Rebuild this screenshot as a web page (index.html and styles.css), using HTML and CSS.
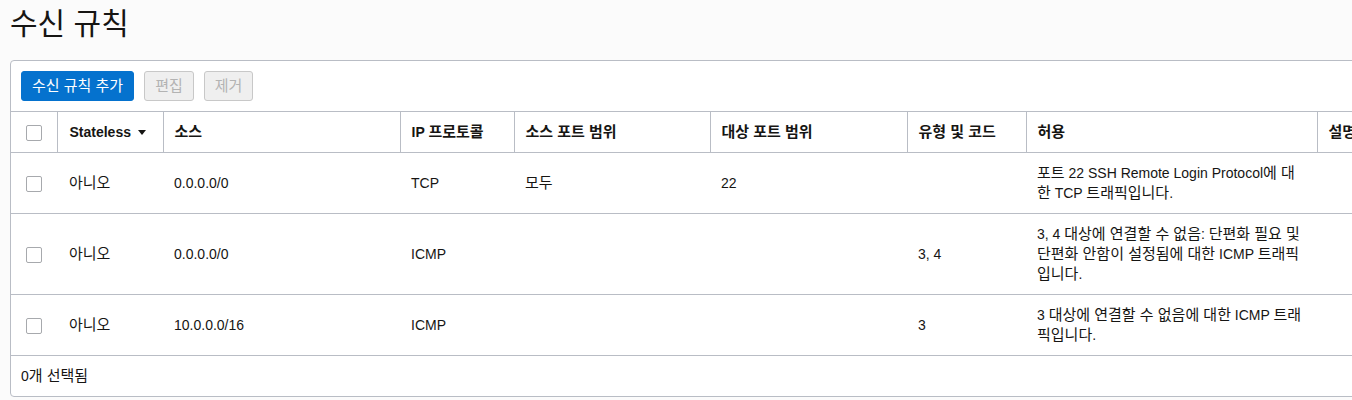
FILE: index.html
```html
<!DOCTYPE html>
<html lang="ko">
<head>
<meta charset="utf-8">
<title>수신 규칙</title>
<link rel="stylesheet" href="styles.css">
</head>
<body>
<h1 class="title">수신 규칙</h1>
<div class="panel">
  <div class="toolbar">
    <button class="btn btn-primary">수신 규칙 추가</button>
    <button class="btn btn-disabled">편집</button>
    <button class="btn btn-disabled">제거</button>
  </div>
  <table class="grid">
    <colgroup>
      <col class="c-check">
      <col class="c-state">
      <col class="c-src">
      <col class="c-proto">
      <col class="c-sport">
      <col class="c-dport">
      <col class="c-type">
      <col class="c-allow">
      <col class="c-desc">
    </colgroup>
    <thead>
      <tr>
        <th class="cb-cell"><span class="cb"></span></th>
        <th class="first">Stateless <span class="caret"></span></th>
        <th><span class="k">소스</span></th>
        <th>IP <span class="k">프로토콜</span></th>
        <th><span class="k">소스 포트 범위</span></th>
        <th><span class="k">대상 포트 범위</span></th>
        <th><span class="k">유형 및 코드</span></th>
        <th><span class="k">허용</span></th>
        <th><span class="k">설명</span></th>
      </tr>
    </thead>
    <tbody>
      <tr>
        <td class="cb-cell"><span class="cb"></span></td>
        <td class="first"><span class="k">아니오</span></td>
        <td>0.0.0.0/0</td>
        <td>TCP</td>
        <td><span class="k">모두</span></td>
        <td>22</td>
        <td></td>
        <td><span class="k">포트</span> 22 SSH Remote Login Protocol<span class="k">에 대</span><br><span class="k">한</span> TCP <span class="k">트래픽입니다</span>.</td>
        <td></td>
      </tr>
      <tr>
        <td class="cb-cell"><span class="cb"></span></td>
        <td class="first"><span class="k">아니오</span></td>
        <td>0.0.0.0/0</td>
        <td>ICMP</td>
        <td></td>
        <td></td>
        <td>3, 4</td>
        <td>3, 4 <span class="k">대상에 연결할 수 없음</span>: <span class="k">단편화 필요 및</span><br><span class="k">단편화 안함이 설정됨에 대한</span> ICMP <span class="k">트래픽</span><br><span class="k">입니다</span>.</td>
        <td></td>
      </tr>
      <tr>
        <td class="cb-cell"><span class="cb"></span></td>
        <td class="first"><span class="k">아니오</span></td>
        <td>10.0.0.0/16</td>
        <td>ICMP</td>
        <td></td>
        <td></td>
        <td>3</td>
        <td>3 <span class="k">대상에 연결할 수 없음에 대한</span> ICMP <span class="k">트래</span><br><span class="k">픽입니다</span>.</td>
        <td></td>
      </tr>
    </tbody>
  </table>
  <div class="footer">0<span class="k">개 선택됨</span></div>
</div>
</body>
</html>
```
FILE: styles.css
```css
html, body {
  margin: 0;
  padding: 0;
  overflow: hidden;
}
body {
  background: #fbfbfb;
  font-family: "Liberation Sans", Arial, "Noto Sans CJK KR", sans-serif;
  font-size: 14px;
  color: #161513;
  padding: 0 0 0 10px;
}
.k {
  font-size: 15px;
  line-height: 16px;
}
.title {
  margin: 0;
  padding-top: 6px;
  height: 54px;
  font-size: 30px;
  font-weight: 400;
  line-height: 36px;
  color: #161513;
}
.panel {
  width: 1420px;
  background: #fff;
  border: 1px solid #b9bdc5;
  border-radius: 4px;
}
.toolbar {
  display: flex;
  gap: 10px;
  padding: 10px 10px;
  border-bottom: 1px solid #b9bdc5;
}
.btn {
  font-family: inherit;
  font-size: 15px;
  height: 30px;
  padding: 0 10px;
  border-radius: 3px;
  line-height: 28px;
}
.btn-primary {
  background: #0572ce;
  border: 1px solid #0572ce;
  color: #fff;
}
.btn-disabled {
  background: #efefef;
  border: 1px solid #c8c8c8;
  color: #b3b3b3;
}
.grid {
  border-collapse: collapse;
  table-layout: fixed;
  width: 1420px;
}
.c-check { width: 46px; }
.c-state { width: 106px; }
.c-src { width: 237px; }
.c-proto { width: 114px; }
.c-sport { width: 196px; }
.c-dport { width: 197px; }
.c-type { width: 119px; }
.c-allow { width: 291px; }
.c-desc { width: 114px; }
.grid th, .grid td {
  padding: 10px 10px 10px 11px;
  line-height: 20px;
  height: 20px;
  text-align: left;
  vertical-align: middle;
  border-bottom: 1px solid #b9bdc5;
}
.grid th {
  font-size: 14px;
  font-weight: 700;
  border-left: 1px solid #b9bdc5;
  white-space: nowrap;
  overflow: hidden;
}
.grid th:first-child {
  border-left: none;
}
.grid .first {
  padding-left: 12px;
}
.grid td:first-child, .grid th:first-child {
  padding: 0 0 0 15px;
}
.cb {
  display: inline-block;
  width: 14px;
  height: 14px;
  border: 1px solid #a7a9ad;
  border-radius: 2px;
  background: #fff;
  vertical-align: middle;
}
.caret {
  display: inline-block;
  width: 0;
  height: 0;
  border-left: 4px solid transparent;
  border-right: 4px solid transparent;
  border-top: 5px solid #161513;
  vertical-align: middle;
  margin-left: 3px;
  margin-top: -2px;
}
.footer {
  padding: 10px 10px;
  line-height: 20px;
}
```
